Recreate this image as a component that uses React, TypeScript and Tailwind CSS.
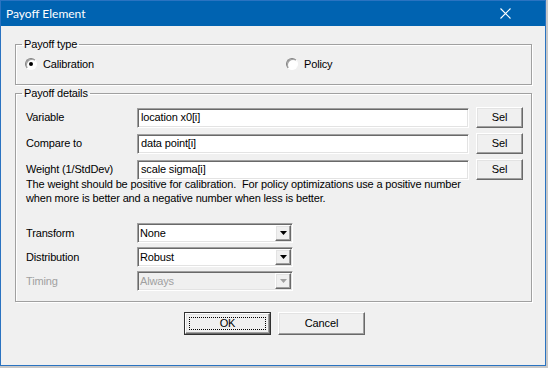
import React from 'react';

const ui = { fontFamily: '"Liberation Sans", Arial, sans-serif' };

const sunken =
  'border border-t-[#a0a0a0] border-l-[#a0a0a0] border-r-white border-b-white shadow-[inset_1px_1px_0_#696969,inset_-1px_-1px_0_#e3e3e3]';
const raised =
  'border border-t-white border-l-white border-r-[#696969] border-b-[#696969] shadow-[inset_-1px_-1px_0_#a0a0a0,inset_1px_1px_0_#e3e3e3]';
const etched =
  'border border-[#a0a0a0] shadow-[1px_1px_0_#fff,inset_1px_1px_0_#fff]';

const Radio = ({ checked, label }: { checked?: boolean; label: string }) => (
  <div className="flex items-center h-[16px]">
    <div className="w-[12px] h-[12px] rounded-full border border-t-[#808080] border-l-[#808080] border-r-white border-b-white bg-white shadow-[inset_1px_1px_0_#a0a0a0] flex items-center justify-center">
      {checked && <div className="w-[4px] h-[4px] rounded-full bg-black" />}
    </div>
    <span className="ml-[6px]">{label}</span>
  </div>
);

const FieldRow = ({ label, value }: { label: string; value: string }) => (
  <div className="flex items-center h-[21px]">
    <span className="w-[111px]">{label}</span>
    <div className={`w-[332px] h-[20px] bg-white flex items-center pl-[3px] ${sunken}`}>{value}</div>
    <button className={`ml-[7px] w-[47px] h-[21px] bg-[#f0f0f0] ${raised}`}>Sel</button>
  </div>
);

const Combo = ({ label, value, disabled }: { label: string; value: string; disabled?: boolean }) => (
  <div className={`flex items-center h-[20px] ${disabled ? 'text-[#a0a0a0]' : 'text-black'}`}>
    <span className="w-[111px]">{label}</span>
    <div className={`w-[156px] h-[20px] flex items-center justify-between pl-[2px] pr-[1px] ${disabled ? 'bg-[#f0f0f0]' : 'bg-white'} ${sunken}`}>
      <span>{value}</span>
      <div className={`w-[16px] h-[16px] bg-[#f0f0f0] flex items-center justify-center ${raised}`}>
        <svg width="7" height="4" viewBox="0 0 7 4">
          <path d="M0 0h7L3.5 4z" fill={disabled ? '#a0a0a0' : '#000'} />
        </svg>
      </div>
    </div>
  </div>
);

export default function App() {
  return (
    <div className="w-[548px] h-[368px] bg-[#c8c8c8] text-[11px] leading-[13px] tracking-[-0.15px] text-black" style={ui}>
      <div className="w-[546px] h-[366px] border border-[#2a73c1] bg-[#f0f0f0] flex flex-col">
        {/* title bar */}
        <div className="h-[25px] bg-[#0063b1] flex items-center justify-between pl-[5px] pr-[34px] text-white tracking-normal">
          <span className="text-[12px]" style={{ fontFamily: 'Lato, "Noto Sans", sans-serif' }}>Payoff Element</span>
          <svg width="11" height="11" viewBox="0 0 11 11">
            <path d="M0.5 0.5l10 10M10.5 0.5l-10 10" stroke="#fff" strokeWidth="1.1" />
          </svg>
        </div>

        <div className="pt-[12px] pl-[14px]">
          <fieldset className={`w-[517px] h-[47px] ${etched}`}>
            <legend className="ml-[6px] px-[2px]">Payoff type</legend>
            <div className="flex pl-[9px] pt-[5px]">
              <div className="w-[261px]">
                <Radio checked label="Calibration" />
              </div>
              <Radio label="Policy" />
            </div>
          </fieldset>

          <fieldset className={`mt-[2px] w-[517px] h-[215px] ${etched}`}>
            <legend className="ml-[6px] px-[2px]">Payoff details</legend>
            <div className="pl-[10px] pt-[7px]">
              <div className="flex flex-col gap-[5px]">
                <FieldRow label="Variable" value="location x0[i]" />
                <FieldRow label="Compare to" value="data point[i]" />
                <FieldRow label="Weight (1/StdDev)" value="scale sigma[i]" />
              </div>
              <p className="mt-[-3px] leading-[14px] whitespace-pre">
                {'The weight should be positive for calibration.  For policy optimizations use a positive number\nwhen more is better and a negative number when less is better.'}
              </p>
              <div className="mt-[18px] flex flex-col gap-[4px]">
                <Combo label="Transform" value="None" />
                <Combo label="Distribution" value="Robust" />
                <Combo label="Timing" value="Always" disabled />
              </div>
            </div>
          </fieldset>
        </div>

        <div className="mt-[10px] pl-[183px] flex gap-[7px]">
          <div className="w-[87px] h-[23px] border border-[#303030]">
            <button className={`relative w-full h-full bg-[#f0f0f0] ${raised}`}>
              <span className="absolute inset-[3px] border border-dotted border-black" />
              OK
            </button>
          </div>
          <button className={`w-[87px] h-[23px] bg-[#f0f0f0] ${raised}`}>Cancel</button>
        </div>
      </div>
    </div>
  );
}
